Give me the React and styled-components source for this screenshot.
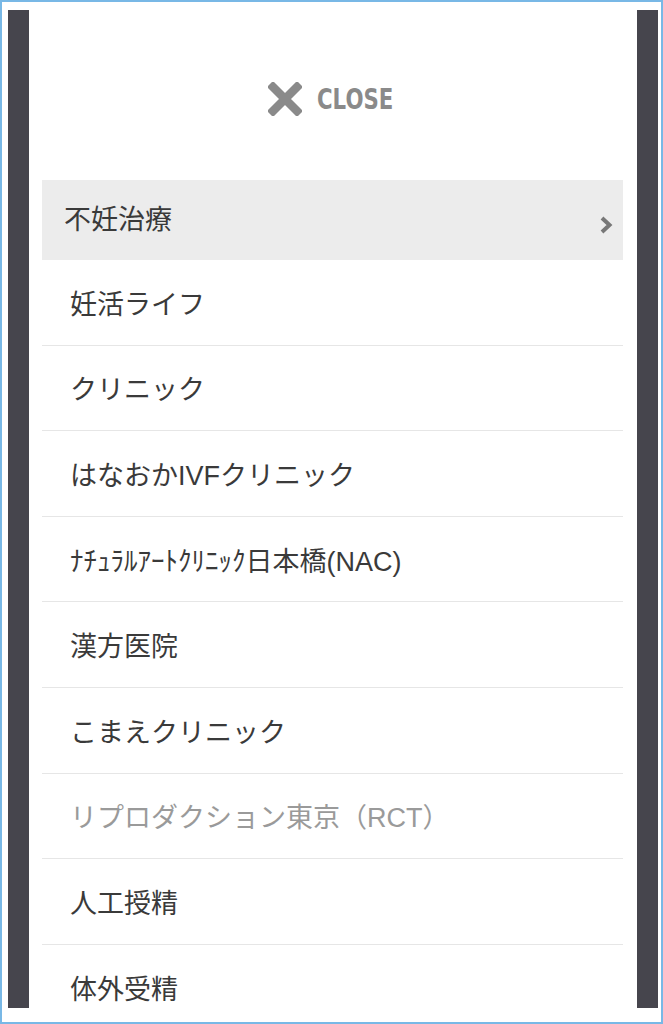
import styled, { createGlobalStyle } from 'styled-components';

const GlobalStyle = createGlobalStyle`
  html, body {
    margin: 0;
    padding: 0;
    background: #ffffff;
  }
`;

const items = [
  { label: '妊活ライフ' },
  { label: 'クリニック' },
  { label: 'はなおかIVFクリニック' },
  { label: 'ﾅﾁｭﾗﾙｱｰﾄｸﾘﾆｯｸ日本橋(NAC)' },
  { label: '漢方医院' },
  { label: 'こまえクリニック' },
  { label: 'リプロダクション東京（RCT）', muted: true },
  { label: '人工授精' },
  { label: '体外受精' },
];

const App = () => {
  return (
    <>
      <GlobalStyle />
      <Frame>
        <Screen>
          <SideStrip />
          <Panel>
            <CloseBar>
              <CloseButton>
                <svg width="34" height="34" viewBox="0 0 34 34">
                  <path d="M5 5 L29 29 M29 5 L5 29" stroke="#8a8a8a" strokeWidth="8.5" strokeLinecap="square" fill="none" />
                </svg>
                <CloseLabel>CLOSE</CloseLabel>
              </CloseButton>
            </CloseBar>
            <MenuList>
              <ActiveItem>
                <ActiveLabel>不妊治療</ActiveLabel>
                <Chevron width="16" height="20" viewBox="0 0 16 20">
                  <path d="M4 3 L11.5 10 L4 17" stroke="#777777" strokeWidth="4" fill="none" />
                </Chevron>
              </ActiveItem>
              {items.map((item) => (
                <MenuItem key={item.label} $muted={item.muted}>
                  {item.label}
                </MenuItem>
              ))}
            </MenuList>
          </Panel>
          <SideStrip />
        </Screen>
      </Frame>
    </>
  );
};

const Frame = styled.div`
  width: 663px;
  height: 1024px;
  box-sizing: border-box;
  border: 2px solid #78b8e6;
  padding: 8px 3px 12px 6px;
  background: #ffffff;
`;

const Screen = styled.div`
  display: flex;
  height: 998px;
  overflow: hidden;
`;

const SideStrip = styled.div`
  width: 21px;
  flex-shrink: 0;
  background: #46454d;
`;

const Panel = styled.div`
  flex: 1;
  background: #ffffff;
  padding: 0 14px 0 13px;
`;

const CloseBar = styled.div`
  height: 170px;
  display: flex;
  justify-content: center;
  align-items: flex-start;
  padding-top: 72px;
  box-sizing: border-box;
`;

const CloseButton = styled.div`
  display: flex;
  align-items: center;
  gap: 15px;
  margin-left: -4px;
`;

const CloseLabel = styled.span`
  font-family: "DejaVu Sans", sans-serif;
  font-weight: bold;
  font-size: 28px;
  color: #8a8a8a;
  display: inline-block;
  transform: scaleX(0.76);
  transform-origin: left center;
  margin-right: -24px;
`;

const MenuList = styled.ul`
  list-style: none;
  margin: 0;
  padding: 0;
  font-family: "Liberation Sans", "Noto Sans CJK JP", sans-serif;
  font-size: 27px;
`;

const ActiveItem = styled.li`
  position: relative;
  height: 80px;
  display: flex;
  align-items: center;
  padding-left: 22px;
  background: #ececec;
  color: #3a3a3a;
`;

const ActiveLabel = styled.span`
  margin-top: -6px;
`;

const Chevron = styled.svg`
  position: absolute;
  right: 9px;
  top: 35px;
`;

const MenuItem = styled.li`
  height: 84.6px;
  display: flex;
  align-items: center;
  padding-left: 28px;
  border-bottom: 1px solid #e6e6e6;
  color: ${(p) => (p.$muted ? '#9a9a9a' : '#3a3a3a')};
`;

export default App;
